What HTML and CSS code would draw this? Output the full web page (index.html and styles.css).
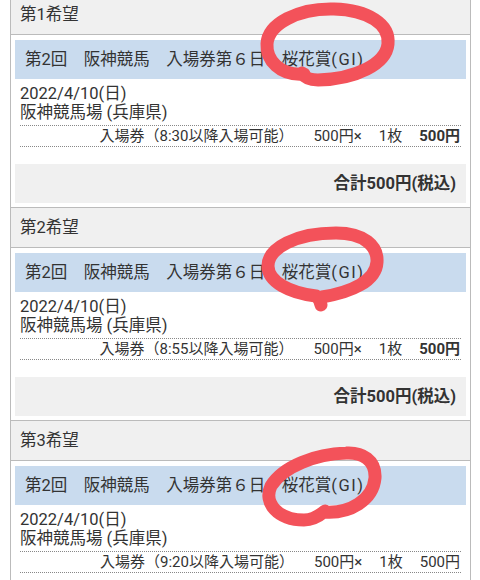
FILE: index.html
```html
<!DOCTYPE html>
<html lang="ja">
<head>
    <meta charset="UTF-8">
    <meta name="viewport" content="width=device-width, initial-scale=1.0">
    <title>申込内容</title>
    <link rel="stylesheet" href="styles.css">
</head>
<body>
    <div class="wrap">
        <section class="hope">
            <div class="hope-head">第1希望</div>
            <div class="hope-body">
                <div class="race">第2回　阪神競馬　入場券第６日　桜花賞<span class="grade">(GI)</span></div>
                <div class="detail">
                    <div class="place">2022/4/10(日)<br>阪神競馬場 (兵庫県)</div>
                    <div class="ticket">
                        <span class="t-name">入場券（8:30以降入場可能）</span>
                        <span class="t-price">500円×</span>
                        <span class="t-qty">1枚</span>
                        <span class="t-sum">500円</span>
                    </div>
                </div>
                <div class="total">合計500円(税込)</div>
            </div>
        </section>

        <section class="hope">
            <div class="hope-head">第2希望</div>
            <div class="hope-body">
                <div class="race">第2回　阪神競馬　入場券第６日　桜花賞<span class="grade">(GI)</span></div>
                <div class="detail">
                    <div class="place">2022/4/10(日)<br>阪神競馬場 (兵庫県)</div>
                    <div class="ticket">
                        <span class="t-name">入場券（8:55以降入場可能）</span>
                        <span class="t-price">500円×</span>
                        <span class="t-qty">1枚</span>
                        <span class="t-sum">500円</span>
                    </div>
                </div>
                <div class="total">合計500円(税込)</div>
            </div>
        </section>

        <section class="hope">
            <div class="hope-head">第3希望</div>
            <div class="hope-body">
                <div class="race">第2回　阪神競馬　入場券第６日　桜花賞<span class="grade">(GI)</span></div>
                <div class="detail">
                    <div class="place">2022/4/10(日)<br>阪神競馬場 (兵庫県)</div>
                    <div class="ticket">
                        <span class="t-name">入場券（9:20以降入場可能）</span>
                        <span class="t-price">500円×</span>
                        <span class="t-qty">1枚</span>
                        <span class="t-sum plain">500円</span>
                    </div>
                </div>
                <div class="total">合計500円(税込)</div>
            </div>
        </section>
    </div>

    <!-- hand-drawn marks over the race names -->
    <svg class="marks" width="480" height="580" viewBox="0 0 480 580">
        <path d="M304,74 C280,76 266,60 267,44 C268,24 298,8 334,9 C368,10 390,24 388,44 C386,64 356,79 318,80 C310,80 305,78 302,73"/>
        <path d="M321,305 C320,300 319,298 316,296 C290,293 268,282 268,266 C268,248 296,233 336,233 C364,233 378,246 377,262 C376,281 352,292 322,297"/>
        <path d="M324,512 C350,514 373,500 375,478 C376,460 362,452 346,453 C316,454 283,466 271,486 C263,503 278,520 304,520 C313,520 319,516 325,511"/>
    </svg>
</body>
</html>
```

FILE: styles.css
```css
body {
    margin: 0;
    font-family: Roboto, "Noto Sans CJK JP", sans-serif;
    font-size: 16.5px;
    color: #333;
    background: #fff;
    overflow: hidden;
}

.wrap {
    margin: -6px 9px 0 10px;
    border-left: 1px solid #bbb;
    border-right: 1px solid #bbb;
}

/* each 希望 block */
.hope {
    border-top: 1px solid #bbb;
}

.hope-head {
    height: 39px;
    line-height: 39px;
    padding-left: 9px;
    background: #f0f0f0;
    border-bottom: 1px solid #bbb;
}

.hope-body {
    padding: 5px 4px 4px;
}

.race {
    height: 39px;
    line-height: 39px;
    padding-left: 10px;
    background: #c9dbee;
}

.grade {
    letter-spacing: 1.5px;
}

.detail {
    margin: 0 5px;
}

.place {
    padding: 5px 0 3px;
    line-height: 19px;
}

.ticket {
    display: flex;
    justify-content: flex-end;
    font-size: 15px;
    line-height: 20px;
    padding-right: 1px;
    border-top: 1px dotted #888;
    border-bottom: 1px dotted #888;
}

.t-price {
    margin-left: 20px;
}

.t-qty {
    margin-left: 17px;
}

.t-sum {
    margin-left: 17px;
    font-weight: bold;
}

.t-sum.plain {
    font-weight: normal;
}

.total {
    margin-top: 17px;
    height: 39px;
    line-height: 39px;
    padding-right: 10px;
    text-align: right;
    font-weight: bold;
    background: #f0f0f0;
}

.marks {
    position: absolute;
    top: 0;
    left: 0;
    pointer-events: none;
}

.marks path {
    fill: none;
    stroke: #f3525a;
    stroke-width: 13;
    stroke-linecap: round;
    stroke-linejoin: round;
}
```
